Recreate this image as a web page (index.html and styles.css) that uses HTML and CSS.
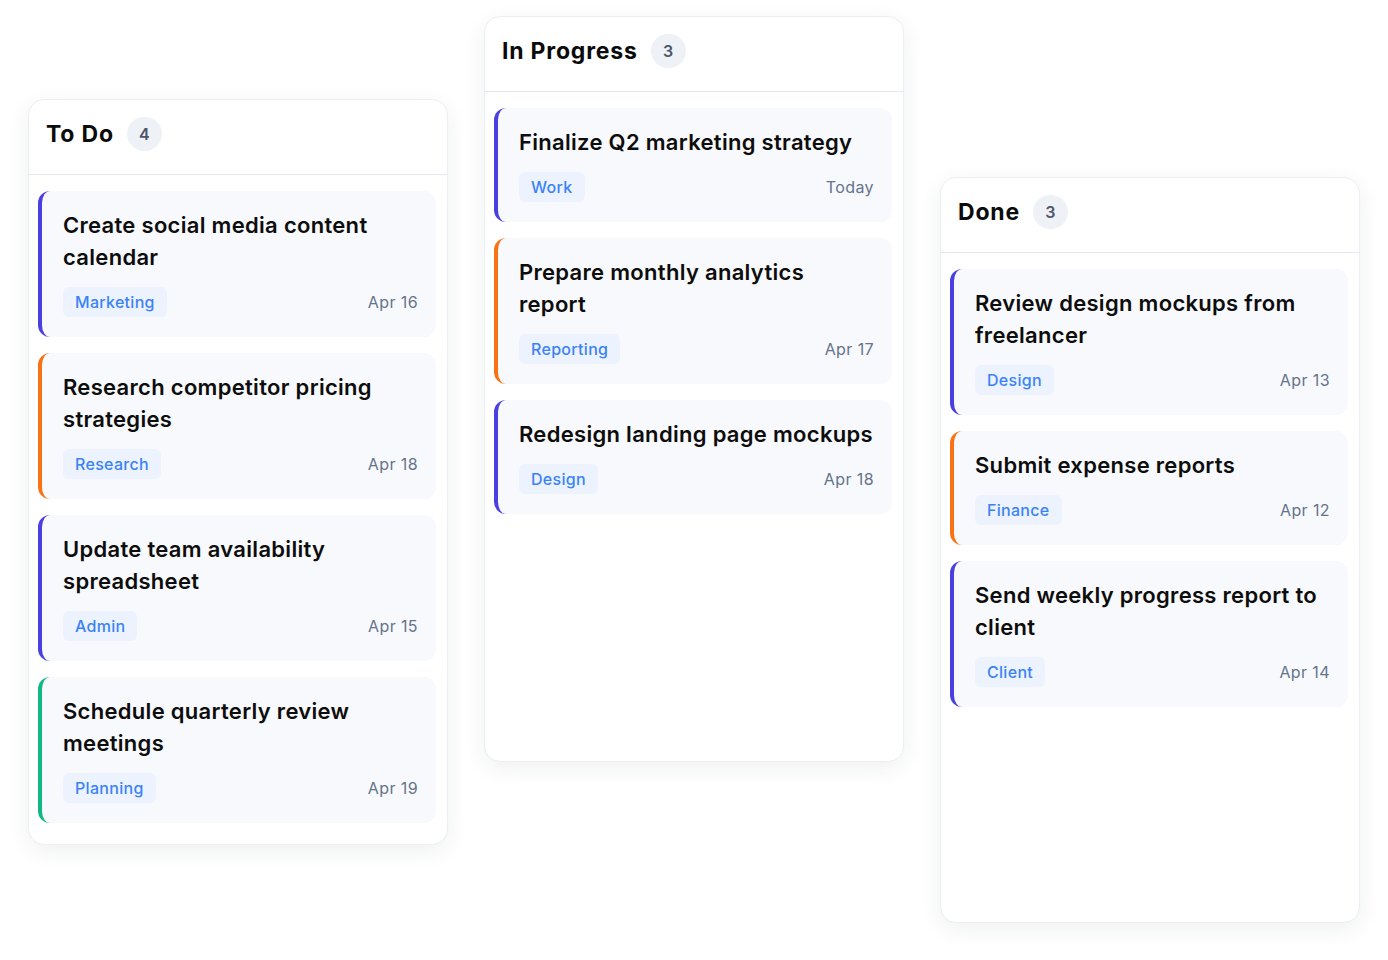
FILE: index.html
```html
<!DOCTYPE html>
<html lang="en">
<head>
<meta charset="utf-8">
<title>Board</title>
<link rel="stylesheet" href="styles.css">
</head>
<body>
<main class="board">
  <section class="column column--todo">
    <header class="column-head">
      <h2 class="column-title">To Do</h2>
      <span class="count">4</span>
    </header>
    <div class="cards">
      <article class="card card--indigo">
        <h3 class="card-title">Create social media content calendar</h3>
        <div class="card-meta"><span class="tag">Marketing</span><span class="date">Apr 16</span></div>
      </article>
      <article class="card card--orange">
        <h3 class="card-title">Research competitor pricing strategies</h3>
        <div class="card-meta"><span class="tag">Research</span><span class="date">Apr 18</span></div>
      </article>
      <article class="card card--indigo">
        <h3 class="card-title">Update team availability spreadsheet</h3>
        <div class="card-meta"><span class="tag">Admin</span><span class="date">Apr 15</span></div>
      </article>
      <article class="card card--green">
        <h3 class="card-title">Schedule quarterly review meetings</h3>
        <div class="card-meta"><span class="tag">Planning</span><span class="date">Apr 19</span></div>
      </article>
    </div>
  </section>
  <section class="column column--progress">
    <header class="column-head">
      <h2 class="column-title">In Progress</h2>
      <span class="count">3</span>
    </header>
    <div class="cards">
      <article class="card card--indigo">
        <h3 class="card-title">Finalize Q2 marketing strategy</h3>
        <div class="card-meta"><span class="tag">Work</span><span class="date">Today</span></div>
      </article>
      <article class="card card--orange">
        <h3 class="card-title">Prepare monthly analytics report</h3>
        <div class="card-meta"><span class="tag">Reporting</span><span class="date">Apr 17</span></div>
      </article>
      <article class="card card--indigo">
        <h3 class="card-title">Redesign landing page mockups</h3>
        <div class="card-meta"><span class="tag">Design</span><span class="date">Apr 18</span></div>
      </article>
    </div>
  </section>
  <section class="column column--done">
    <header class="column-head">
      <h2 class="column-title">Done</h2>
      <span class="count">3</span>
    </header>
    <div class="cards">
      <article class="card card--indigo">
        <h3 class="card-title">Review design mockups from freelancer</h3>
        <div class="card-meta"><span class="tag">Design</span><span class="date">Apr 13</span></div>
      </article>
      <article class="card card--orange">
        <h3 class="card-title">Submit expense reports</h3>
        <div class="card-meta"><span class="tag">Finance</span><span class="date">Apr 12</span></div>
      </article>
      <article class="card card--indigo">
        <h3 class="card-title">Send weekly progress report to client</h3>
        <div class="card-meta"><span class="tag">Client</span><span class="date">Apr 14</span></div>
      </article>
    </div>
  </section>
</main>
</body>
</html>
```
FILE: styles.css
```css
* { box-sizing: border-box; }
html, body { margin: 0; padding: 0; background: #ffffff; }
body {
  font-family: "Inter", "Noto Sans", sans-serif;
  color: #111111;
  width: 1388px;
  height: 960px;
  overflow: hidden;
}
.board {
  display: flex;
  align-items: flex-start;
  gap: 36px;
  padding: 16px 28px 0;
}
.column {
  width: 420px;
  height: 746px;
  flex: none;
  background: #ffffff;
  border: 1px solid #eceef4;
  border-radius: 16px;
  box-shadow: 0 6px 22px rgba(30, 41, 59, 0.07);
  display: flex;
  flex-direction: column;
}
.column--todo { margin-top: 83px; }
.column--done { margin-top: 161px; }
.column-head {
  display: flex;
  align-items: center;
  gap: 13px;
  height: 75px;
  padding: 0 18px 7px 17px;
  border-bottom: 1px solid #e4e8f0;
}
.column-title {
  margin: 0;
  font-size: 23px;
  font-weight: 700;
  letter-spacing: 0.8px;
  color: #0b0b0b;
}
.count {
  width: 35px;
  height: 34px;
  border-radius: 17px;
  background: #eef2f7;
  color: #4b5567;
  font-size: 16px;
  font-weight: 600;
  display: flex;
  align-items: center;
  justify-content: center;
}
.cards {
  display: flex;
  flex-direction: column;
  gap: 16px;
  padding: 16px 11px 0 9px;
}
.card {
  background: #f8f9fc;
  border-radius: 12px;
  border-left: 4px solid #4f46e5;
  padding: 18px 18px 20px 21px;
}
.card--indigo { border-left-color: #4a3fe0; }
.card--orange { border-left-color: #f97316; }
.card--green { border-left-color: #10b981; }
.card-title {
  margin: 0;
  font-size: 22px;
  line-height: 32px;
  font-weight: 600;
  letter-spacing: 0.3px;
  color: #0d0d0d;
}
.card-meta {
  margin-top: 14px;
  display: flex;
  align-items: center;
  justify-content: space-between;
}
.tag {
  height: 30px;
  padding: 0 12px;
  display: inline-flex;
  align-items: center;
  background: #ecf3fe;
  color: #3b82f6;
  border-radius: 6px;
  font-size: 16px;
  font-weight: 500;
  letter-spacing: 0.3px;
}
.date {
  font-size: 16px;
  color: #64748b;
  font-weight: 400;
  letter-spacing: 0.4px;
}
```
